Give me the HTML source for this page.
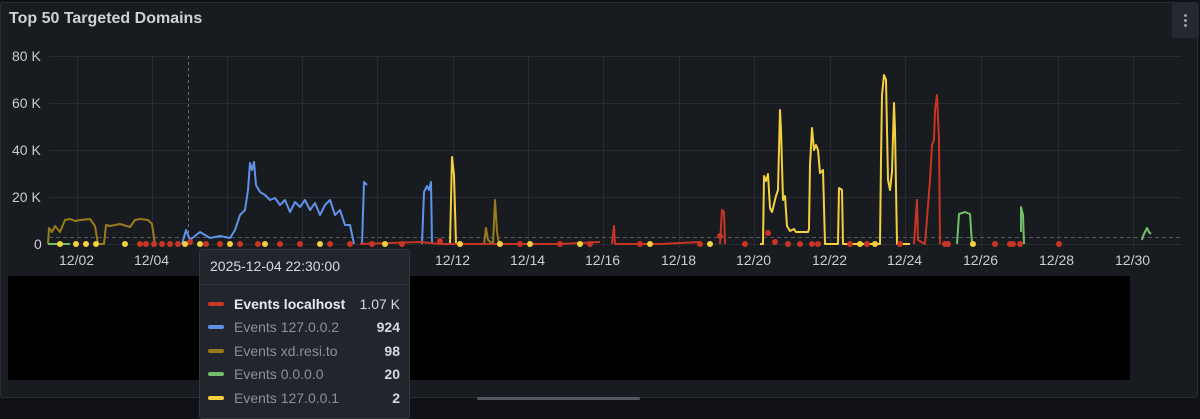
<!DOCTYPE html>
<html><head><meta charset="utf-8"><style>
*{margin:0;padding:0;box-sizing:border-box}
body{width:1200px;height:412px;background:#111217;overflow:hidden;font-family:"Liberation Sans",sans-serif;position:relative}
.panel{position:absolute;left:0;top:2px;width:1198px;height:396px;background:#181b1f;border:1px solid #2a2d33;border-radius:3px}
.title{position:absolute;left:9px;top:10px;color:#d0d1d6;font-size:16px;font-weight:bold}
.menu{position:absolute;left:1172px;top:2px;width:27px;height:36px;background:#25282e;border-radius:3px}
.menu i{position:absolute;left:12px;width:3px;height:3px;border-radius:50%;background:#9a9ca3}
.lbl{position:absolute;color:#ccccd2;font-size:14px}
.black{position:absolute;left:8px;top:276px;width:1122px;height:104px;background:#000}
.tip{position:absolute;left:199px;top:249px;width:211px;height:170px;background:#22252b;border:1px solid #33363d;border-radius:3px}
.tip .h{position:absolute;left:10px;top:8px;color:#d8d9de;font-size:14px}
.tip .sep{position:absolute;left:0;right:0;top:34px;border-top:1px solid #33363d}
.row{position:absolute;left:8px;width:192px;font-size:14px;color:#8e9098}
.row span.s{position:absolute;left:0;top:6px;width:16px;height:4px;border-radius:2px}
.row .n{position:absolute;left:26px}
.row .v{position:absolute;right:0;color:#d8d9de;font-weight:bold}
.scroll{position:absolute;left:477px;top:397px;width:163px;height:3px;background:#55585f;border-radius:2px}
</style></head><body>
<div class="panel"></div>
<div class="title">Top 50 Targeted Domains</div>
<div class="menu"><i style="top:12px"></i><i style="top:17px"></i><i style="top:22px"></i></div>
<div class="lbl" style="left:12px;top:48px">80 K</div>
<div class="lbl" style="left:12px;top:95px">60 K</div>
<div class="lbl" style="left:12px;top:142px">40 K</div>
<div class="lbl" style="left:12px;top:189px">20 K</div>
<div class="lbl" style="left:34px;top:236px">0</div>
<svg style="position:absolute;left:0;top:0" width="1200" height="412">
<g stroke="#2a2c31" stroke-width="1">
<line x1="49" y1="56.5" x2="1181" y2="56.5"/><line x1="49" y1="103.5" x2="1181" y2="103.5"/><line x1="49" y1="150.5" x2="1181" y2="150.5"/><line x1="49" y1="197.5" x2="1181" y2="197.5"/><line x1="49" y1="244.5" x2="1181" y2="244.5"/>
<line x1="77.5" y1="56" x2="77.5" y2="248"/><line x1="152.5" y1="56" x2="152.5" y2="248"/><line x1="227.5" y1="56" x2="227.5" y2="248"/><line x1="302.5" y1="56" x2="302.5" y2="248"/><line x1="377.5" y1="56" x2="377.5" y2="248"/><line x1="453.5" y1="56" x2="453.5" y2="248"/><line x1="528.5" y1="56" x2="528.5" y2="248"/><line x1="603.5" y1="56" x2="603.5" y2="248"/><line x1="679.5" y1="56" x2="679.5" y2="248"/><line x1="754.5" y1="56" x2="754.5" y2="248"/><line x1="830.5" y1="56" x2="830.5" y2="248"/><line x1="905.5" y1="56" x2="905.5" y2="248"/><line x1="981.5" y1="56" x2="981.5" y2="248"/><line x1="1058.5" y1="56" x2="1058.5" y2="248"/><line x1="1133.5" y1="56" x2="1133.5" y2="248"/>
</g>
<line x1="49" y1="237.5" x2="1181" y2="237.5" stroke="#55585e" stroke-dasharray="4,3"/>
<line x1="188.5" y1="56" x2="188.5" y2="248" stroke="#6a6c72" stroke-dasharray="3,3"/>
<g fill="none" stroke-width="2" stroke-linejoin="round">
<polyline stroke="#9a7b1c" points="48,244 49,228 52,232 55,226 60,232 65,220 70,219 75,221 80,220 90,219 95,226 98,244 104,244 106,225 110,226 120,224 130,227 135,220 140,219 148,220 152,224 155,244"/>
<polyline stroke="#9a7b1c" points="484,244 486,228 488,240 493,244 495,200 497,232 499,244"/>
<polyline stroke="#5f93ea" points="182,244 186,230 190,240 200,232 210,238 220,236 230,238 235,230 240,215 245,210 248,190 250,163 252,170 254,162 256,185 260,192 265,195 270,200 275,198 280,205 285,200 290,212 295,202 300,207 305,200 310,210 315,203 320,215 325,205 330,200 335,215 340,210 345,225 350,225 354,244"/>
<polyline stroke="#5f93ea" points="362,244 364,182 367,185"/>
<polyline stroke="#5f93ea" points="422,244 424,192 427,186 429,190 431,182 432,244"/>
<polyline stroke="#f2d03f" points="450,244 452,157 454,175 456,244"/>
<polyline stroke="#f2d03f" points="760,244 763,244 764,176 766,181 768,174 770,208 772,212 776,196 778,190 779,150 780,110 781,130 783,200 785,196 787,226 790,231 794,229 796,232 808,232 809,229 810,165 812,128 814,150 816,145 818,150 820,173 823,170 825,244 838,244 839,188 842,190 843,244 860,244 880,244 881,160 882,95 884,75 886,80 888,180 890,190 892,172 894,103 895,130 897,244 910,244"/>
<polyline stroke="#c83525" points="720,244 722,210 724,212 725,244"/>
<polyline stroke="#c83525" points="612,244 614,226 615,244 660,244 700,242"/>
<polyline stroke="#c83525" points="914,244 917,200 918,240 925,244 930,180 932,145 934,140 935,110 937,95 939,140 940,244"/>
<polyline stroke="#73bf69" points="957,244 959,214 965,212 970,214 972,244"/>
<polyline stroke="#73bf69" points="1021,232 1021,207 1023,215 1024,244"/>
<polyline stroke="#73bf69" points="1142,240 1143,236 1147,228 1149,232 1151,234"/>
<polyline stroke="#c83525" points="360,244 420,242 440,244 560,244 600,242"/>
<polyline stroke="#73bf69" points="48,244 70,244"/>
</g>
<g fill="#c83525">
<circle cx="140" cy="244" r="3"/><circle cx="146" cy="244" r="3"/><circle cx="154" cy="244" r="3"/><circle cx="162" cy="244" r="3"/><circle cx="170" cy="244" r="3"/><circle cx="178" cy="244" r="3"/><circle cx="190" cy="242" r="3"/><circle cx="206" cy="244" r="3"/><circle cx="220" cy="244" r="3"/><circle cx="240" cy="244" r="3"/><circle cx="258" cy="244" r="3"/><circle cx="280" cy="244" r="3"/><circle cx="300" cy="244" r="3"/><circle cx="330" cy="244" r="3"/><circle cx="350" cy="244" r="3"/><circle cx="372" cy="244" r="3"/><circle cx="402" cy="244" r="3"/><circle cx="440" cy="241" r="3"/><circle cx="520" cy="244" r="3"/><circle cx="560" cy="244" r="3"/><circle cx="590" cy="244" r="3"/><circle cx="640" cy="244" r="3"/><circle cx="700" cy="244" r="3"/><circle cx="720" cy="236" r="3"/><circle cx="745" cy="244" r="3"/><circle cx="768" cy="233" r="3"/><circle cx="775" cy="242" r="3"/><circle cx="788" cy="244" r="3"/><circle cx="800" cy="244" r="3"/><circle cx="812" cy="244" r="3"/><circle cx="818" cy="244" r="3"/><circle cx="850" cy="244" r="3"/><circle cx="867" cy="244" r="3"/><circle cx="900" cy="244" r="3"/><circle cx="945" cy="244" r="3"/><circle cx="948" cy="244" r="3"/><circle cx="995" cy="244" r="3"/><circle cx="1010" cy="244" r="3"/><circle cx="1013" cy="244" r="3"/><circle cx="1020" cy="244" r="3"/><circle cx="1059" cy="244" r="3"/>
</g>
<g fill="#f2d03f">
<circle cx="60" cy="244" r="3"/><circle cx="76" cy="244" r="3"/><circle cx="86" cy="244" r="3"/><circle cx="96" cy="244" r="3"/><circle cx="125" cy="244" r="3"/><circle cx="185" cy="244" r="3"/><circle cx="200" cy="244" r="3"/><circle cx="230" cy="244" r="3"/><circle cx="265" cy="244" r="3"/><circle cx="320" cy="244" r="3"/><circle cx="385" cy="244" r="3"/><circle cx="460" cy="244" r="3"/><circle cx="500" cy="244" r="3"/><circle cx="530" cy="244" r="3"/><circle cx="580" cy="244" r="3"/><circle cx="650" cy="244" r="3"/><circle cx="710" cy="244" r="3"/><circle cx="860" cy="244" r="3"/><circle cx="875" cy="244" r="3"/><circle cx="973" cy="244" r="3"/>
</g>
</svg>
<div class="lbl" style="left:59px;top:252px">12/02</div>
<div class="lbl" style="left:134px;top:252px">12/04</div>
<div class="lbl" style="left:435px;top:252px">12/12</div>
<div class="lbl" style="left:510px;top:252px">12/14</div>
<div class="lbl" style="left:585px;top:252px">12/16</div>
<div class="lbl" style="left:661px;top:252px">12/18</div>
<div class="lbl" style="left:736px;top:252px">12/20</div>
<div class="lbl" style="left:812px;top:252px">12/22</div>
<div class="lbl" style="left:887px;top:252px">12/24</div>
<div class="lbl" style="left:963px;top:252px">12/26</div>
<div class="lbl" style="left:1039px;top:252px">12/28</div>
<div class="lbl" style="left:1115px;top:252px">12/30</div>
<div class="black"></div>
<div class="scroll"></div>
<div class="tip">
<div class="h">2025-12-04 22:30:00</div>
<div class="sep"></div>
<div class="row" style="top:46px"><span class="s" style="background:#c83525"></span><span class="n" style="color:#e8e9ee;font-weight:bold">Events localhost</span><span class="v" style="font-weight:normal">1.07 K</span></div>
<div class="row" style="top:69px"><span class="s" style="background:#5f93ea"></span><span class="n">Events 127.0.0.2</span><span class="v">924</span></div>
<div class="row" style="top:93px"><span class="s" style="background:#9a7b1c"></span><span class="n">Events xd.resi.to</span><span class="v">98</span></div>
<div class="row" style="top:116px"><span class="s" style="background:#73bf69"></span><span class="n">Events 0.0.0.0</span><span class="v">20</span></div>
<div class="row" style="top:140px"><span class="s" style="background:#f2d03f"></span><span class="n">Events 127.0.0.1</span><span class="v">2</span></div>
</div>
</body></html>
